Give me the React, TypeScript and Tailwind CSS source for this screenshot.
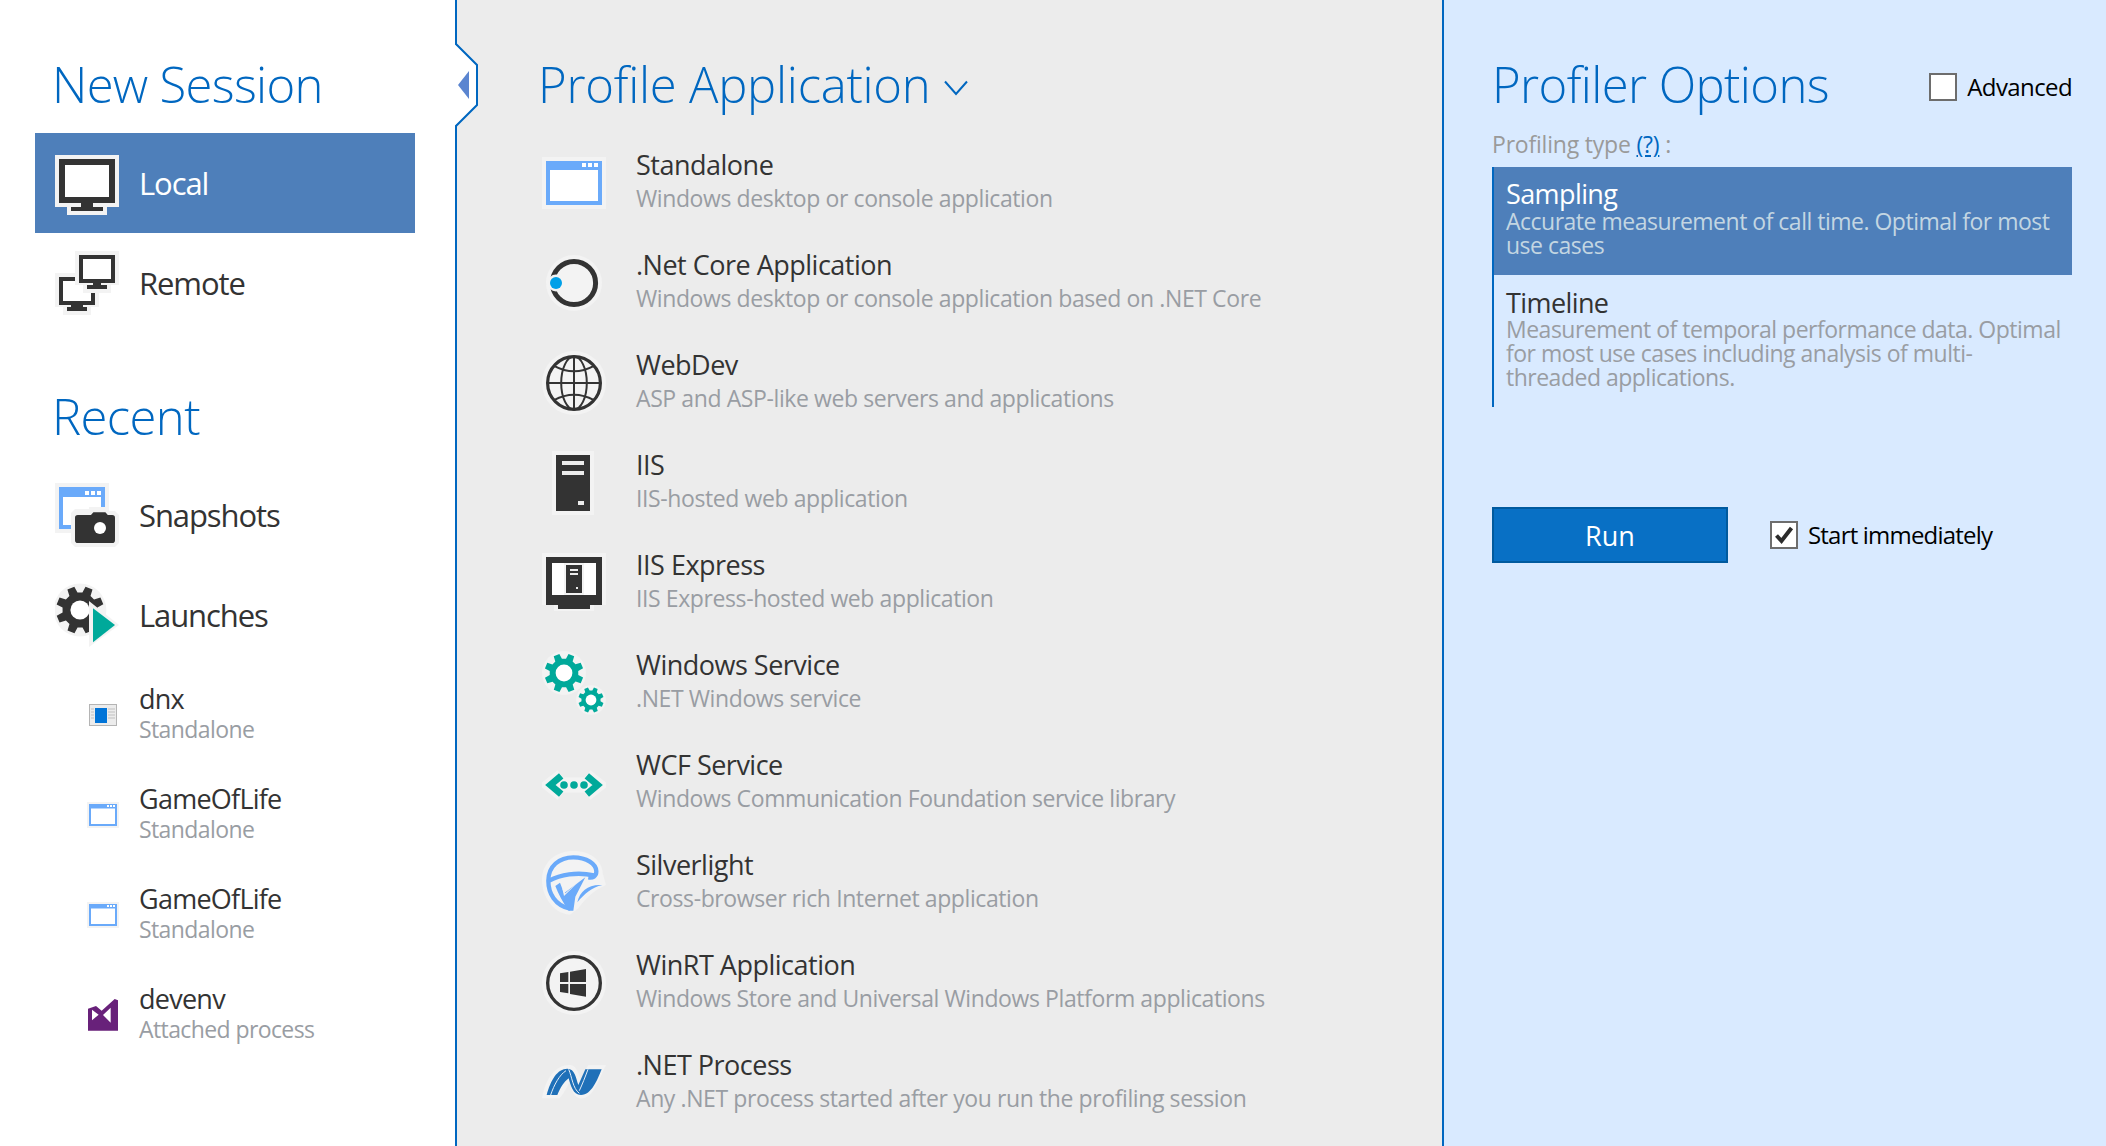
import React from "react";

const HALO = "#f3f3f3";
const DARK = "#333333";
const TEAL = "#00a99a";
const SKY = "#6aaafa";

// builds a cog outline, the VS icons use the same shape in a few sizes
function gearPath(cx: number, cy: number, outer: number, inner: number, teeth: number, rot = 0) {
  const pts: string[] = [];
  const step = (Math.PI * 2) / teeth;
  for (let i = 0; i < teeth; i++) {
    const a = rot + i * step;
    const offsets: [number, number][] = [
      [-0.32, inner],
      [-0.2, outer],
      [0.2, outer],
      [0.32, inner],
    ];
    for (const [o, r] of offsets) {
      const t = a + o * step;
      pts.push(`${(cx + Math.cos(t) * r).toFixed(2)} ${(cy + Math.sin(t) * r).toFixed(2)}`);
    }
  }
  return `M${pts.join("L")}Z`;
}

function Svg({ size = 64, box = "0 0 16 16", children }: { size?: number; box?: string; children: React.ReactNode }) {
  return (
    <svg width={size} height={size} viewBox={box} className="shrink-0" aria-hidden="true">
      {children}
    </svg>
  );
}

function WindowIcon({ size = 64 }: { size?: number }) {
  return (
    <Svg size={size}>
      <rect x="0" y="1.5" width="16" height="13" fill={HALO} />
      <rect x="1" y="2.5" width="14" height="11" fill={SKY} />
      <rect x="2" y="4.75" width="12" height="7.75" fill="#fff" />
      <rect x="10" y="3" width="1" height="1" fill="#fff" />
      <rect x="11.5" y="3" width="1" height="1" fill="#fff" />
      <rect x="13" y="3" width="1" height="1" fill="#fff" />
    </Svg>
  );
}

function LocalIcon() {
  return (
    <Svg>
      <path d="M0 1H16V14H13V16H3V14H0Z" fill={HALO} />
      <rect x="1" y="2" width="14" height="11" fill={DARK} />
      <rect x="2.5" y="3.5" width="11" height="8" fill="#fff" />
      <rect x="6.5" y="13" width="3" height="1" fill={DARK} />
      <rect x="4" y="14" width="8" height="1" fill={DARK} />
    </Svg>
  );
}

function RemoteIcon() {
  return (
    <Svg>
      <path d="M0 5.5H11V14H9V16H2V14H0Z" fill={HALO} />
      <rect x="1" y="6.5" width="9" height="7" fill={DARK} />
      <rect x="2" y="7.5" width="7" height="5" fill="#fff" />
      <rect x="4" y="13.5" width="3" height="0.5" fill={DARK} />
      <rect x="3" y="14" width="5" height="1" fill={DARK} />
      <path d="M5 0H16V8.5H14V10.5H7V8.5H5Z" fill={HALO} />
      <rect x="6" y="1" width="9" height="7" fill={DARK} />
      <rect x="7" y="2" width="7" height="5" fill="#fff" />
      <rect x="9.5" y="8" width="2" height="0.5" fill={DARK} />
      <rect x="8" y="8.5" width="5" height="1" fill={DARK} />
    </Svg>
  );
}

function SnapshotsIcon() {
  return (
    <Svg>
      <rect x="0" y="0" width="13.5" height="12.5" fill={HALO} />
      <rect x="1" y="1" width="11.5" height="10.5" fill={SKY} />
      <rect x="2" y="3.5" width="9.5" height="7" fill="#fff" />
      <rect x="7.5" y="2" width="1" height="1" fill="#fff" />
      <rect x="9" y="2" width="1" height="1" fill="#fff" />
      <rect x="10.5" y="2" width="1" height="1" fill="#fff" />
      <path d="M5 6.5H8.5V6H13V7H15L16 8V15L15 16H5L4 15V7.5Z" fill={HALO} />
      <path d="M5.7 8H9L9.6 7.3H12.6L13.2 8H14.3Q15 8 15 8.7V14.3Q15 15 14.3 15H5.7Q5 15 5 14.3V8.7Q5 8 5.7 8Z" fill={DARK} />
      <circle cx="11.25" cy="11.25" r="1.5" fill="#fff" />
    </Svg>
  );
}

function LaunchesIcon() {
  return (
    <Svg>
      <circle cx="6.25" cy="6.75" r="6.6" fill={HALO} />
      <path d={gearPath(6.25, 6.75, 6, 4.4, 8, 0.39)} fill={DARK} />
      <circle cx="6.25" cy="6.75" r="2.4" fill="#fff" />
      <path d="M8.5 4.5L16 10.5L8.5 16Z" fill={HALO} />
      <path d="M9.5 6.3L15 10.5L9.5 14.8Z" fill={TEAL} />
    </Svg>
  );
}

function NetCoreIcon() {
  return (
    <Svg>
      <circle cx="8" cy="8" r="7" fill={HALO} />
      <circle cx="8" cy="8" r="5.4" fill="none" stroke={DARK} strokeWidth="1.25" />
      <circle cx="3.5" cy="8" r="2.1" fill={HALO} />
      <circle cx="3.5" cy="8" r="1.5" fill="#00a0e8" />
    </Svg>
  );
}

function WebDevIcon() {
  return (
    <Svg>
      <circle cx="8" cy="8" r="8" fill={HALO} />
      <g fill="none" stroke={DARK}>
        <circle cx="8" cy="8" r="6.6" strokeWidth="0.8" />
        <ellipse cx="8" cy="8" rx="3.2" ry="6.6" strokeWidth="0.5" />
        <path d="M8 1.4V14.6M1.4 8H14.6" strokeWidth="0.5" />
        <path d="M3 3.7Q8 6.4 13 3.7M3 12.3Q8 9.6 13 12.3" strokeWidth="0.5" />
      </g>
    </Svg>
  );
}

function IisIcon() {
  return (
    <Svg>
      <rect x="2.5" y="0" width="10.5" height="16" fill={HALO} />
      <rect x="3.5" y="1" width="8.5" height="14" fill={DARK} />
      <rect x="5" y="2.5" width="5.5" height="1" fill="#ececec" />
      <rect x="5" y="5" width="5.5" height="1" fill="#ececec" />
      <rect x="9" y="12.5" width="1.5" height="1" fill="#ececec" />
    </Svg>
  );
}

function IisExpressIcon() {
  return (
    <Svg>
      <path d="M0 0.5H16V13.5H13V15H3V13.5H0Z" fill={HALO} />
      <rect x="1" y="1.5" width="14" height="12" fill={DARK} />
      <rect x="2.5" y="3" width="11" height="8" fill="#fff" />
      <rect x="5.5" y="3" width="5" height="8" fill={HALO} />
      <rect x="6" y="3.5" width="4" height="7" fill={DARK} />
      <rect x="7" y="4.5" width="2" height="0.5" fill="#ececec" />
      <rect x="7" y="5.5" width="2" height="0.5" fill="#ececec" />
      <rect x="8.5" y="9" width="0.5" height="0.5" fill="#ececec" />
      <rect x="6.5" y="13.5" width="3" height="0.5" fill={DARK} />
      <rect x="4" y="13.5" width="8" height="1" fill={DARK} />
    </Svg>
  );
}

function ServiceIcon() {
  return (
    <Svg>
      <circle cx="5.5" cy="5.5" r="5.5" fill={HALO} />
      <circle cx="12.25" cy="12.25" r="3.7" fill={HALO} />
      <path d={gearPath(5.5, 5.5, 4.9, 3.6, 8, 0.39)} fill={TEAL} />
      <circle cx="5.5" cy="5.5" r="2.1" fill="#fff" />
      <path d={gearPath(12.25, 12.25, 3.2, 2.4, 8, 0.39)} fill={TEAL} />
      <circle cx="12.25" cy="12.25" r="1.35" fill="#fff" />
    </Svg>
  );
}

function WcfIcon() {
  return (
    <Svg>
      <path d="M5 6.2L2.1 8.5L5 10.8M11 6.2L13.9 8.5L11 10.8" fill="none" stroke={HALO} strokeWidth="3.6" />
      <rect x="3.5" y="6.6" width="9" height="3.8" rx="1.9" fill={HALO} />
      <path d="M4.8 6.2L2.1 8.5L4.8 10.8M11.2 6.2L13.9 8.5L11.2 10.8" fill="none" stroke={TEAL} strokeWidth="1.7" />
      <circle cx="5.5" cy="8.5" r="0.95" fill={TEAL} />
      <circle cx="8" cy="8.5" r="0.95" fill={TEAL} />
      <circle cx="10.5" cy="8.5" r="0.95" fill={TEAL} />
    </Svg>
  );
}

function SilverlightIcon() {
  return (
    <Svg box="66 213 192 192">
      <path d="M150 404C95 399 66 345 66 300C66 245 110 213 160 213C215 213 248 245 248 280L258 315C225 330 200 350 175 385Z" fill={HALO} />
      <g fill="none" stroke={SKY} strokeWidth="13">
        <path d="M150 386C105 376 85 340 85 302C85 258 118 232 160 232C200 232 229 252 229 274C229 290 218 294 205 292" />
        <path d="M88 302C120 284 170 275 222 286" />
      </g>
      <path d="M106 318L120 308L132 340L196 292L166 350L160 392L146 392Q120 355 106 318Z" fill={SKY} />
      <path d="M126 322L132 348L176 305L136 340Z" fill={HALO} />
      <path d="M172 367C180 332 205 312 247 315C215 322 195 340 172 367Z" fill={SKY} />
    </Svg>
  );
}

function WinRtIcon() {
  return (
    <Svg box="66 513 192 192">
      <circle cx="162" cy="609" r="96" fill={HALO} />
      <circle cx="162" cy="609" r="79" fill="none" stroke={DARK} strokeWidth="10" />
      <path d="M120 580L145 576V606H120ZM150 575L198 567V606H150ZM120 612H145V640L120 636ZM150 612H198V650L150 642Z" fill={DARK} />
    </Svg>
  );
}

function DotNetIcon() {
  return (
    <Svg box="66 813 192 192">
      <path d="M66 955C78 890 110 853 150 855C172 856 175 885 185 905C192 885 195 868 205 856H258C240 890 222 950 190 955C165 958 155 935 148 905C140 925 128 945 118 955Z" fill={HALO} />
      <path d="M80 945C92 900 112 866 142 866C165 866 168 895 175 915L196 868H245C232 900 215 945 183 945C158 945 152 915 146 895C132 905 120 925 112 945Z" fill="#1f70b8" />
      <path d="M92 945C102 915 118 885 138 872M146 868C156 890 158 925 178 940M204 868C196 890 186 915 178 932" fill="none" stroke="#e4eef8" strokeWidth="3" />
    </Svg>
  );
}

function DnxIcon() {
  return (
    <Svg size={32} box="0 0 32 32">
      <rect x="2.5" y="5.5" width="27" height="21" fill="#ececec" stroke="#b4b4b4" />
      <rect x="8" y="9" width="12" height="15" fill="#0074d8" />
      <path d="M4 10H7M4 13H7M4 16H7M4 19H7M21 10H28M21 13H28M21 16H28M21 19H28" stroke="#c0c0c0" />
    </Svg>
  );
}

function DevenvIcon() {
  return (
    <Svg size={32} box="261 958 96 96">
      <path d="M264 987L288 979L305 993L344 958L354 962V1053H264Z" fill="#68217a" />
      <path d="M276 990V1022L296 1005ZM332 984V1029L309 1006Z" fill="#fff" />
    </Svg>
  );
}

const sessionRows = [
  { label: "Local", icon: <LocalIcon />, selected: true },
  { label: "Remote", icon: <RemoteIcon /> },
];

const recentRows = [
  { label: "Snapshots", icon: <SnapshotsIcon /> },
  { label: "Launches", icon: <LaunchesIcon /> },
];

const launches = [
  { title: "dnx", sub: "Standalone", icon: <DnxIcon /> },
  { title: "GameOfLife", sub: "Standalone", icon: <WindowIcon size={32} /> },
  { title: "GameOfLife", sub: "Standalone", icon: <WindowIcon size={32} /> },
  { title: "devenv", sub: "Attached process", icon: <DevenvIcon /> },
];

const apps = [
  { title: "Standalone", sub: "Windows desktop or console application", icon: <WindowIcon /> },
  { title: ".Net Core Application", sub: "Windows desktop or console application based on .NET Core", icon: <NetCoreIcon /> },
  { title: "WebDev", sub: "ASP and ASP-like web servers and applications", icon: <WebDevIcon /> },
  { title: "IIS", sub: "IIS-hosted web application", icon: <IisIcon /> },
  { title: "IIS Express", sub: "IIS Express-hosted web application", icon: <IisExpressIcon /> },
  { title: "Windows Service", sub: ".NET Windows service", icon: <ServiceIcon /> },
  { title: "WCF Service", sub: "Windows Communication Foundation service library", icon: <WcfIcon /> },
  { title: "Silverlight", sub: "Cross-browser rich Internet application", icon: <SilverlightIcon /> },
  { title: "WinRT Application", sub: "Windows Store and Universal Windows Platform applications", icon: <WinRtIcon /> },
  { title: ".NET Process", sub: "Any .NET process started after you run the profiling session", icon: <DotNetIcon /> },
];

function Heading({ children, className }: { children: React.ReactNode; className: string }) {
  return <h2 className={`text-[49px] leading-[66px] font-light text-[#0067c0] ${className}`}>{children}</h2>;
}

function BigRow({ label, icon, selected }: { label: string; icon: React.ReactNode; selected?: boolean }) {
  return (
    <div className={`flex h-[100px] items-center gap-[20px] pl-[20px] ${selected ? "bg-[#4e7fba]" : ""}`}>
      {icon}
      <span className={`pt-[1px] text-[31px] tracking-[-1.1px] ${selected ? "text-white" : "text-[#333333]"}`}>{label}</span>
    </div>
  );
}

function Checkbox({ checked }: { checked?: boolean }) {
  return (
    <span className="flex h-[28px] w-[28px] shrink-0 items-center justify-center border-2 border-[#6d6d6d] bg-white">
      {checked && (
        <svg width="20" height="20" viewBox="0 0 20 20" aria-hidden="true">
          <path d="M2.5 10.5L7.5 16L17.5 3" fill="none" stroke="#2b2b2b" strokeWidth="4" />
        </svg>
      )}
    </span>
  );
}

export default function App() {
  return (
    <div className="flex h-[1146px] w-[2106px] overflow-hidden bg-white font-['Open_Sans',sans-serif]">
      <aside className="relative z-10 w-[455px] shrink-0 pl-[35px]">
        <div className="h-[133px] pl-[17px] pt-[51px]">
          <Heading className="tracking-[-0.7px]">New Session</Heading>
        </div>
        <div className="w-[380px]">
          {sessionRows.map((r) => (
            <BigRow key={r.label} {...r} />
          ))}
        </div>
        <div className="h-[132px] pl-[17px] pt-[50px]">
          <Heading className="tracking-[-0.6px]">Recent</Heading>
        </div>
        <div className="w-[380px]">
          {recentRows.map((r) => (
            <BigRow key={r.label} {...r} />
          ))}
          {launches.map((l, i) => (
            <div key={i} className="flex h-[100px] items-center gap-[20px] pl-[52px]">
              {l.icon}
              <div className="-mt-[2px]">
                <div className="text-[27px] leading-[30px] tracking-[-0.75px] text-[#333333]">{l.title}</div>
                <div className="text-[23px] leading-[30px] tracking-[-0.6px] text-[#999da3]">{l.sub}</div>
              </div>
            </div>
          ))}
        </div>
      </aside>

      <main className="relative flex-1 border-x-2 border-[#0067c0] bg-[#ececec] pl-[85px]">
        {/* tab notch that pokes out of the left panel */}
        <svg width="24" height="84" viewBox="0 0 24 84" className="absolute left-[-2px] top-[43px]" aria-hidden="true">
          <path d="M0 1L22 22V62L0 83Z" fill="#fff" />
          <path d="M1 0V1L22 22V62L1 83V84" fill="none" stroke="#0067c0" strokeWidth="2" />
          <path d="M3 42L14 28V56Z" fill="#5b85d0" />
        </svg>
        <div className="-ml-[4px] flex h-[133px] items-start gap-[13px] pt-[51px]">
          <Heading className="tracking-[-0.25px]">Profile Application</Heading>
          <svg width="24" height="16" viewBox="0 0 24 16" className="mt-[29px]" aria-hidden="true">
            <path d="M1 1.5L12 14L23 1.5" fill="none" stroke="#0067c0" strokeWidth="2" />
          </svg>
        </div>
        {apps.map((a) => (
          <div key={a.title} className="flex h-[100px] items-center gap-[30px]">
            {a.icon}
            <div className="-mt-[4px]">
              <div className="text-[27px] leading-[34px] tracking-[-0.5px] text-[#333333]">{a.title}</div>
              <div className="text-[23px] leading-[33px] tracking-[-0.4px] text-[#999da3]">{a.sub}</div>
            </div>
          </div>
        ))}
      </main>

      <aside className="w-[662px] shrink-0 bg-[#d9eaff] pl-[48px] pr-[34px]">
        <div className="flex h-[111px] items-start justify-between pt-[51px]">
          <Heading className="tracking-[-0.6px]">Profiler Options</Heading>
          <label className="mt-[22px] flex items-center gap-[10px] text-[24px] leading-[28px] tracking-[-0.6px] text-black">
            <Checkbox />
            Advanced
          </label>
        </div>
        <div className="h-[56px] pt-[17px] text-[23px] leading-[32px] tracking-[-0.2px] text-[#9a9a9a]">
          Profiling type <span className="text-[#0067c0] underline">(?)</span> :
        </div>
        <div className="border-l-2 border-[#0067c0]">
          <div className="h-[108px] bg-[#4e7fba] pl-[12px] pt-[11px]">
            <div className="text-[27px] leading-[31px] tracking-[-0.6px] text-white">Sampling</div>
            <div className="text-[23px] leading-[24px] tracking-[-0.5px] text-[#c3d6e2]">
              Accurate measurement of call time. Optimal for most use cases
            </div>
          </div>
          <div className="h-[132px] pl-[12px] pt-[13px]">
            <div className="text-[27px] leading-[29px] tracking-[-0.6px] text-[#333333]">Timeline</div>
            <div className="max-w-[558px] text-[23px] leading-[24px] tracking-[-0.5px] text-[#999da3]">
              Measurement of temporal performance data. Optimal for most use cases including analysis of multi-threaded applications.
            </div>
          </div>
        </div>
        <div className="mt-[100px] flex items-center gap-[42px]">
          <button type="button" className="h-[56px] w-[236px] border-2 border-[#005a9e] bg-[#0870c5] pt-[2px] text-[27px] text-white">
            Run
          </button>
          <label className="flex items-center gap-[10px] text-[24px] tracking-[-0.8px] text-black">
            <Checkbox checked />
            Start immediately
          </label>
        </div>
      </aside>
    </div>
  );
}
